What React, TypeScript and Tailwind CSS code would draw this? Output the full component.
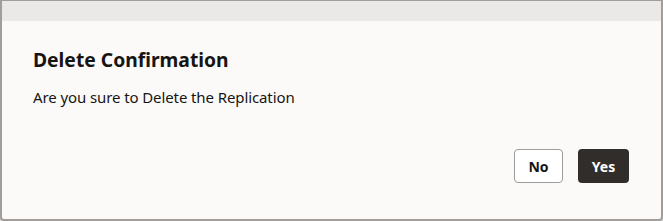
export default function App() {
  return (
    <div className="w-[663px] h-[221px] bg-[#d6d4d2]">
      <div
        className="flex h-full flex-col overflow-hidden rounded-b-[4px] border-x-2 border-b-2 border-t border-[#a09d9b] bg-[#fcfaf9]"
        style={{ fontFamily: '"Noto Sans", "Open Sans", sans-serif' }}
      >
        <div className="h-[20px] bg-[#ebe9e7]" />
        <div className="flex flex-1 flex-col px-[31px] pt-[26px]">
          <h2 className="text-[19.3px] font-bold leading-[26px] text-[#161513]">
            Delete Confirmation
          </h2>
          <p className="mt-[14px] text-[15px] leading-[20px] tracking-[-0.1px] text-[#161513]">
            Are you sure to Delete the Replication
          </p>
          <div className="mt-[42px] flex justify-end gap-[15px] pr-[1px]">
            <button className="h-[34px] w-[49px] rounded-[4px] border border-[#9e9b98] bg-white text-[14px] font-bold text-[#161513]">
              No
            </button>
            <button className="h-[34px] w-[51px] rounded-[4px] bg-[#312d2a] text-[14px] font-bold text-white">
              Yes
            </button>
          </div>
        </div>
      </div>
    </div>
  );
}
